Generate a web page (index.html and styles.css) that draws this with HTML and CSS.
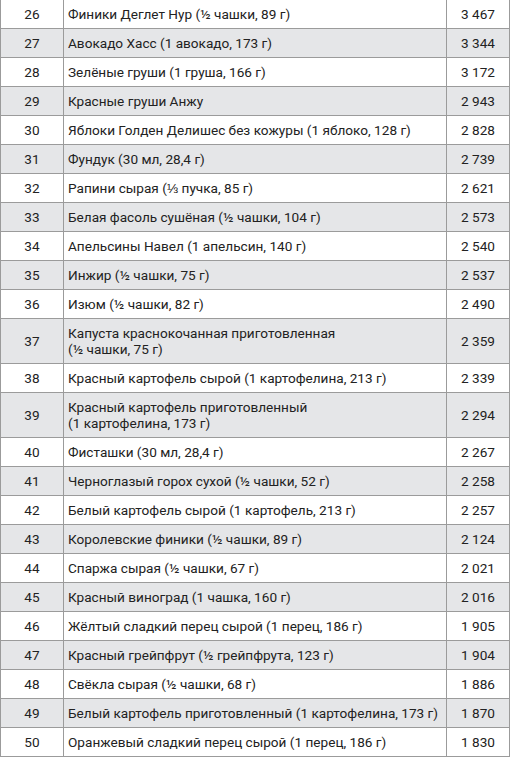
FILE: index.html
```html
<!DOCTYPE html>
<html lang="ru">
<head>
<meta charset="utf-8">
<link rel="stylesheet" href="styles.css">
</head>
<body>
<table class="list">
<colgroup><col class="c-num"><col class="c-name"><col class="c-val"></colgroup>
<tbody>
<tr><td class="num">26</td><td class="name">Финики Деглет Нур (½ чашки, 89 г)</td><td class="val">3 467</td></tr>
<tr class="alt"><td class="num">27</td><td class="name">Авокадо Хасс (1 авокадо, 173 г)</td><td class="val">3 344</td></tr>
<tr><td class="num">28</td><td class="name">Зелёные груши (1 груша, 166 г)</td><td class="val">3 172</td></tr>
<tr class="alt"><td class="num">29</td><td class="name">Красные груши Анжу</td><td class="val">2 943</td></tr>
<tr><td class="num">30</td><td class="name">Яблоки Голден Делишес без кожуры (1 яблоко, 128 г)</td><td class="val">2 828</td></tr>
<tr class="alt"><td class="num">31</td><td class="name">Фундук (30 мл, 28,4 г)</td><td class="val">2 739</td></tr>
<tr><td class="num">32</td><td class="name">Рапини сырая (⅓ пучка, 85 г)</td><td class="val">2 621</td></tr>
<tr class="alt"><td class="num">33</td><td class="name">Белая фасоль сушёная (½ чашки, 104 г)</td><td class="val">2 573</td></tr>
<tr><td class="num">34</td><td class="name">Апельсины Навел (1 апельсин, 140 г)</td><td class="val">2 540</td></tr>
<tr class="alt"><td class="num">35</td><td class="name">Инжир (½ чашки, 75 г)</td><td class="val">2 537</td></tr>
<tr><td class="num">36</td><td class="name">Изюм (½ чашки, 82 г)</td><td class="val">2 490</td></tr>
<tr class="alt"><td class="num">37</td><td class="name">Капуста краснокочанная приготовленная<br>(½ чашки, 75 г)</td><td class="val">2 359</td></tr>
<tr><td class="num">38</td><td class="name">Красный картофель сырой (1 картофелина, 213 г)</td><td class="val">2 339</td></tr>
<tr class="alt"><td class="num">39</td><td class="name">Красный картофель приготовленный<br>(1 картофелина, 173 г)</td><td class="val">2 294</td></tr>
<tr><td class="num">40</td><td class="name">Фисташки (30 мл, 28,4 г)</td><td class="val">2 267</td></tr>
<tr class="alt"><td class="num">41</td><td class="name">Черноглазый горох сухой (½ чашки, 52 г)</td><td class="val">2 258</td></tr>
<tr><td class="num">42</td><td class="name">Белый картофель сырой (1 картофель, 213 г)</td><td class="val">2 257</td></tr>
<tr class="alt"><td class="num">43</td><td class="name">Королевские финики (½ чашки, 89 г)</td><td class="val">2 124</td></tr>
<tr><td class="num">44</td><td class="name">Спаржа сырая (½ чашки, 67 г)</td><td class="val">2 021</td></tr>
<tr class="alt"><td class="num">45</td><td class="name">Красный виноград (1 чашка, 160 г)</td><td class="val">2 016</td></tr>
<tr><td class="num">46</td><td class="name">Жёлтый сладкий перец сырой (1 перец, 186 г)</td><td class="val">1 905</td></tr>
<tr class="alt"><td class="num">47</td><td class="name">Красный грейпфрут (½ грейпфрута, 123 г)</td><td class="val">1 904</td></tr>
<tr><td class="num">48</td><td class="name">Свёкла сырая (½ чашки, 68 г)</td><td class="val">1 886</td></tr>
<tr class="alt"><td class="num">49</td><td class="name">Белый картофель приготовленный (1 картофелина, 173 г)</td><td class="val">1 870</td></tr>
<tr><td class="num">50</td><td class="name">Оранжевый сладкий перец сырой (1 перец, 186 г)</td><td class="val">1 830</td></tr>
</tbody>
</table>
</body>
</html>
```

FILE: styles.css
```css
html, body {
  margin: 0;
  padding: 0;
  background: #ffffff;
}

.list {
  border-collapse: collapse;
  table-layout: fixed;
  width: 510px;
  font-family: Roboto, "Liberation Sans", sans-serif;
  font-size: 13.6px;
  line-height: 16px;
  color: #222222;
  border-left: 1px solid #9b9b9b;
  border-right: 1px solid #9b9b9b;
  border-bottom: 1px solid #9b9b9b;
}

.c-num { width: 63px; }
.c-name { width: 383px; }
.c-val { width: 63px; }

.list td {
  border-top: 1px solid #9b9b9b;
  border-left: 1px solid #9b9b9b;
  padding: 6px 4px;
  vertical-align: middle;
}

.list tr:first-child td {
  border-top: none;
}

.list .num {
  text-align: center;
}

.list .name {
  text-align: left;
}

.list .val {
  text-align: center;
}

.list .alt td {
  background: #e5e6e8;
}
```
